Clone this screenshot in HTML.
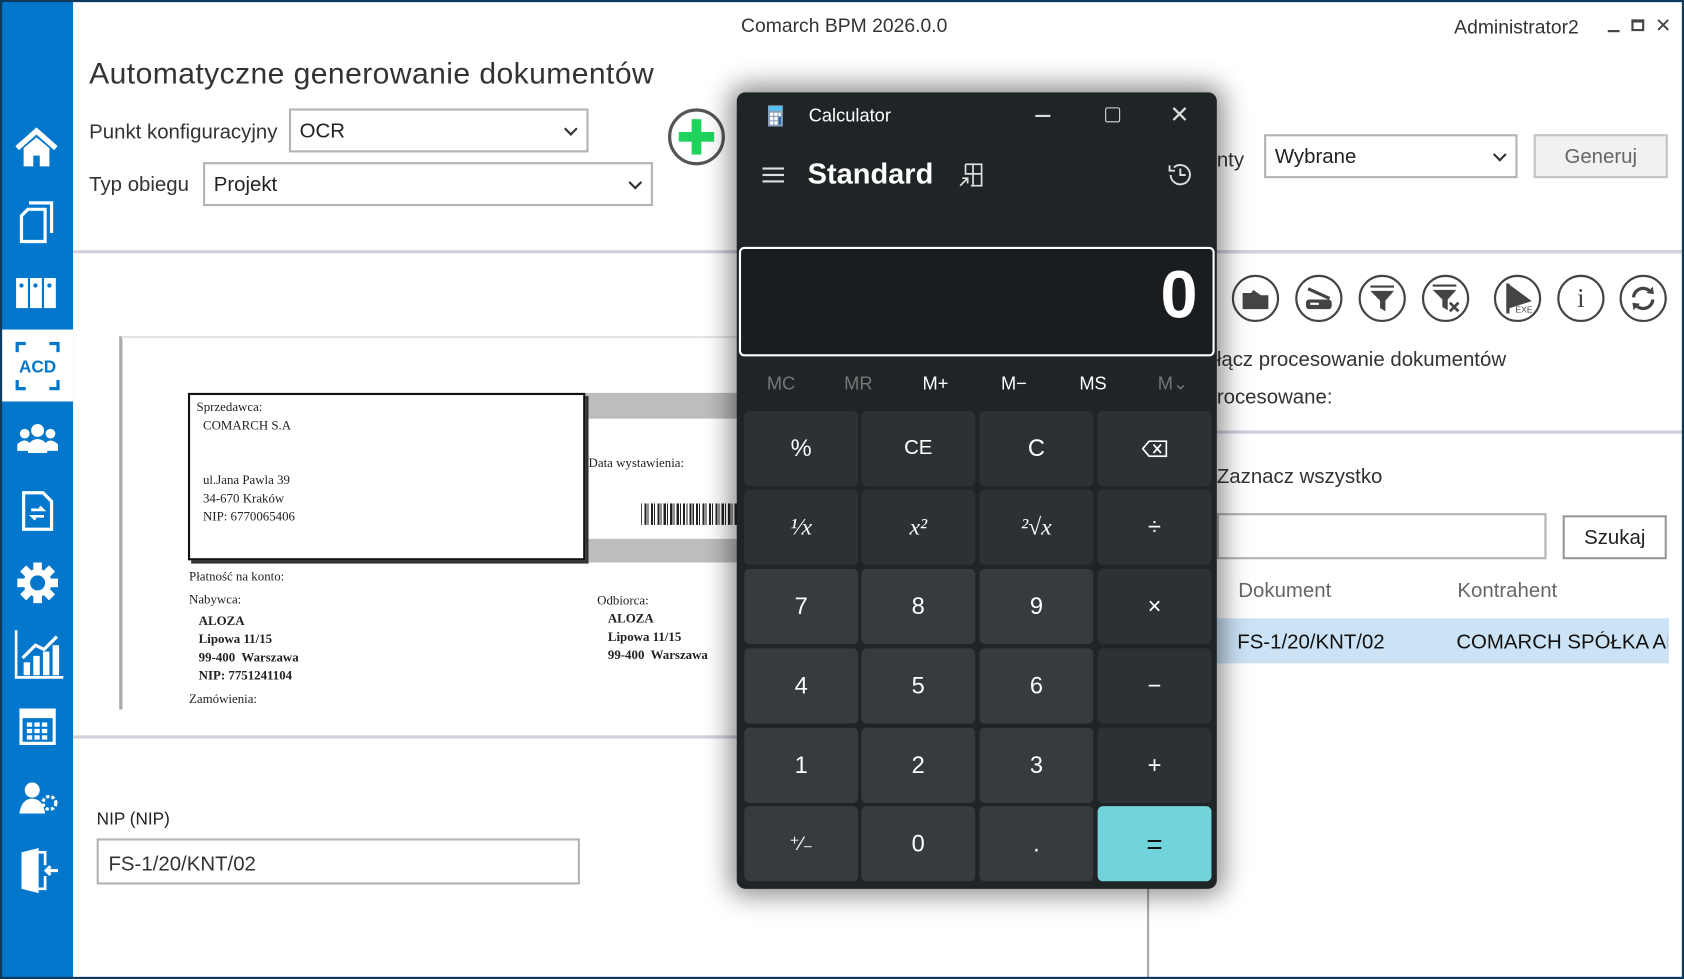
<!DOCTYPE html>
<html><head><meta charset="utf-8"><style>
*{margin:0;padding:0;box-sizing:border-box}
html,body{width:1684px;height:979px;overflow:hidden;background:#fff}
#w{position:absolute;left:0;top:0;width:1568px;height:912px;transform:scale(1.07398,1.07346);transform-origin:0 0;font-family:"Liberation Sans",sans-serif;color:#333;background:#fff;overflow:hidden}
.a{position:absolute}
.sb{left:0;top:0;width:68px;height:912px;background:#0277cc}
.t{white-space:nowrap}
#w>.t{margin-top:2px}
.sel{border:2px solid #b4b4b4;background:#fff;font-size:19px;color:#222;padding-left:8px;padding-top:3px;display:flex;align-items:center}
.sel:after{content:"";position:absolute;right:10px;top:50%;width:7px;height:7px;border-right:2px solid #333;border-bottom:2px solid #333;transform:translateY(-70%) rotate(45deg)}
.hr{height:3px;background:#d0d0de}
.ic{width:44px;height:44px;border:2px solid #444;border-radius:50%;display:flex;align-items:center;justify-content:center}
.calc{left:686px;top:86px;width:447px;height:742px;background:#1f2426;border-radius:8px;box-shadow:0 0 24px 6px rgba(0,0,0,.45);color:#fff;font-family:"Liberation Sans",sans-serif}
.k{position:absolute;width:106px;height:70px;border-radius:5px;display:flex;align-items:center;justify-content:center;font-size:22px;color:#fff}
.f{background:#2c3134}.d{background:#363b3d}
.m{position:absolute;top:262px;font-size:17px}
</style></head><body><div id="w">
<div class="a sb"></div>
<div class="a" style="left:0;top:307px;width:68px;height:67px;background:#fff"></div>
<svg class="a" style="left:14px;top:118px" width="40" height="40" viewBox="0 0 40 40"><path d="M2 20 L20 4 L38 20" stroke="#fff" stroke-width="5" fill="none"/><path d="M8 20 V37 H17 V27 H23 V37 H32 V20 L20 10Z" fill="#fff"/></svg>
<svg class="a" style="left:18px;top:187px" width="32" height="40" viewBox="0 0 32 40"><path d="M9 2 H30 V30" stroke="#fff" stroke-width="3" fill="none"/><path d="M8 8 H24 V38 H2 V14Z" stroke="#fff" stroke-width="3" fill="none"/></svg>
<svg class="a" style="left:14px;top:258px" width="40" height="30" viewBox="0 0 40 30"><rect x="1" y="1" width="11" height="28" fill="#fff"/><rect x="14" y="1" width="11" height="28" fill="#fff"/><rect x="27" y="1" width="11" height="28" fill="#fff"/><circle cx="6" cy="8" r="2" fill="#0277cc"/><circle cx="19" cy="8" r="2" fill="#0277cc"/><circle cx="32" cy="8" r="2" fill="#0277cc"/></svg>
<svg class="a" style="left:14px;top:318px" width="42" height="46" viewBox="0 0 42 46"><path d="M2 10 V2 H10 M32 2 H40 V10 M2 36 V44 H10 M32 44 H40 V36" stroke="#0277cc" stroke-width="3" fill="none"/><text x="21" y="29" text-anchor="middle" font-size="16" font-weight="bold" fill="#0277cc" font-family="Liberation Sans">ACD</text></svg>
<svg class="a" style="left:16px;top:394px" width="38" height="28" viewBox="0 0 38 28"><circle cx="19" cy="7" r="6" fill="#fff"/><circle cx="7" cy="10" r="4.5" fill="#fff"/><circle cx="31" cy="10" r="4.5" fill="#fff"/><path d="M10 28 V20 Q19 10 28 20 V28Z M0 26 V20 Q6 14 11 18 V26Z M27 18 Q32 14 38 20 V26 H27Z" fill="#fff"/></svg>
<svg class="a" style="left:20px;top:457px" width="30" height="38" viewBox="0 0 30 38"><path d="M2 2 H20 L28 10 V36 H2Z" stroke="#fff" stroke-width="3" fill="none"/><path d="M9 18 H20 L17 15 M21 24 H10 L13 27" stroke="#fff" stroke-width="2.5" fill="none"/></svg>
<svg class="a" style="left:16px;top:524px" width="38" height="38" viewBox="0 0 38 38"><circle cx="19" cy="19" r="13" fill="#fff"/><g fill="#fff"><rect x="15" y="0" width="8" height="8"/><rect x="15" y="30" width="8" height="8"/><rect x="0" y="15" width="8" height="8"/><rect x="30" y="15" width="8" height="8"/><rect x="15" y="0" width="8" height="8" transform="rotate(45 19 19)"/><rect x="15" y="30" width="8" height="8" transform="rotate(45 19 19)"/><rect x="0" y="15" width="8" height="8" transform="rotate(45 19 19)"/><rect x="30" y="15" width="8" height="8" transform="rotate(45 19 19)"/></g><circle cx="19" cy="19" r="7" fill="#0277cc"/></svg>
<svg class="a" style="left:13px;top:587px" width="46" height="46" viewBox="0 0 46 46"><path d="M2 0 V44 H46" stroke="#fff" stroke-width="2.5" fill="none"/><rect x="9" y="30" width="6" height="12" fill="#fff"/><rect x="18" y="24" width="6" height="18" fill="#fff"/><rect x="27" y="20" width="6" height="22" fill="#fff"/><rect x="36" y="14" width="6" height="28" fill="#fff"/><path d="M8 26 L20 14 L28 18 L40 6" stroke="#fff" stroke-width="3" fill="none"/></svg>
<svg class="a" style="left:18px;top:660px" width="34" height="34" viewBox="0 0 34 34"><rect x="1.5" y="1.5" width="31" height="31" stroke="#fff" stroke-width="3" fill="none"/><rect x="1" y="1" width="32" height="8" fill="#fff"/><g fill="#fff"><rect x="7" y="13" width="5" height="4"/><rect x="14" y="13" width="5" height="4"/><rect x="21" y="13" width="5" height="4"/><rect x="7" y="19" width="5" height="4"/><rect x="14" y="19" width="5" height="4"/><rect x="21" y="19" width="5" height="4"/><rect x="7" y="25" width="5" height="4"/><rect x="14" y="25" width="5" height="4"/><rect x="21" y="25" width="5" height="4"/></g></svg>
<svg class="a" style="left:16px;top:728px" width="38" height="30" viewBox="0 0 38 30"><circle cx="14" cy="8" r="7" fill="#fff"/><path d="M2 30 Q4 16 14 16 Q24 16 26 30Z" fill="#fff"/><circle cx="30" cy="20" r="6" stroke="#fff" stroke-width="3" fill="none" stroke-dasharray="3 2"/></svg>
<svg class="a" style="left:18px;top:790px" width="36" height="42" viewBox="0 0 36 42"><path d="M2 4 L18 0 V42 L2 38Z" fill="#fff"/><path d="M18 4 H24 V16 M24 26 V38 H18" stroke="#fff" stroke-width="2.5" fill="none"/><path d="M36 21 H25 M29 17 L25 21 L29 25" stroke="#fff" stroke-width="3" fill="none"/></svg>

<div class="a t" style="left:690px;top:12px;font-size:18px;color:#333">Comarch BPM 2026.0.0</div>
<div class="a t" style="left:1354px;top:13px;font-size:18px;color:#333">Administrator2</div>
<div class="a" style="left:1497px;top:28px;width:11px;height:2px;background:#444"></div>
<div class="a" style="left:1519px;top:18px;width:12px;height:11px;border:2px solid #444;border-top-width:3px"></div>
<div class="a t" style="left:1541px;top:12px;font-size:18px;color:#444">✕</div>

<div class="a t" style="left:83px;top:51px;font-size:28px;color:#333;letter-spacing:.4px">Automatyczne generowanie dokumentów</div>
<div class="a t" style="left:83px;top:111px;font-size:19px">Punkt konfiguracyjny</div>
<div class="a sel" style="left:269px;top:101px;width:279px;height:41px">OCR</div>
<div class="a t" style="left:83px;top:160px;font-size:19px">Typ obiegu</div>
<div class="a sel" style="left:189px;top:151px;width:419px;height:41px">Projekt</div>
<div class="a" style="left:622px;top:101px;width:53px;height:53px;border:3px solid #555;border-radius:50%"></div>
<div class="a" style="left:644px;top:111px;width:9px;height:33px;background:#1fd35c"></div>
<div class="a" style="left:632px;top:123px;width:33px;height:9px;background:#1fd35c"></div>
<div class="a hr" style="left:68px;top:233px;width:1500px"></div>

<div class="a" style="left:111px;top:313px;width:3px;height:348px;background:#aaa"></div>
<div class="a" style="left:113px;top:313px;width:580px;height:2px;background:#e4e4e4"></div>
<div class="a" style="left:545px;top:366px;width:150px;height:24px;background:#bdbdbd"></div>
<div class="a" style="left:545px;top:502px;width:150px;height:22px;background:#bdbdbd"></div>
<div class="a" style="left:175px;top:366px;width:370px;height:156px;border:2px solid #111;box-shadow:3px 3px 0 #333;background:#fff;font-family:'Liberation Serif',serif;font-size:12px;color:#222;padding:3px 6px;line-height:17px">Sprzedawca:<br>&nbsp;&nbsp;COMARCH S.A<br><br><br>&nbsp;&nbsp;ul.Jana Pawla 39<br>&nbsp;&nbsp;34-670 Kraków<br>&nbsp;&nbsp;NIP: 6770065406</div>
<div class="a t" style="left:548px;top:422px;font-family:'Liberation Serif',serif;font-size:12px;color:#222">Data wystawienia:</div>
<div class="a" style="left:597px;top:469px;width:95px;height:20px;background:repeating-linear-gradient(90deg,#222 0 1px,#fff 1px 3px,#222 3px 5px,#fff 5px 6px)"></div>
<div class="a" style="left:176px;top:528px;font-family:'Liberation Serif',serif;font-size:12px;color:#222;line-height:18px">Płatność na konto:<br><span style="line-height:24px">Nabywca:</span><br><b style="line-height:17px;display:block;padding-left:9px">ALOZA<br>Lipowa 11/15<br>99-400&nbsp; Warszawa<br>NIP: 7751241104</b><span style="line-height:26px">Zamówienia:</span></div>
<div class="a" style="left:556px;top:550px;font-family:'Liberation Serif',serif;font-size:12px;color:#222;line-height:18px">Odbiorca:<br><b style="line-height:17px;display:block;padding-left:10px">ALOZA<br>Lipowa 11/15<br>99-400&nbsp; Warszawa</b></div>
<div class="a hr" style="left:68px;top:685px;width:630px"></div>

<div class="a t" style="left:90px;top:753px;font-size:16px;color:#222">NIP (NIP)</div>
<div class="a" style="left:90px;top:781px;width:450px;height:43px;border:2px solid #b4b4b4;font-size:19px;color:#333;padding:12px 9px 0">FS-1/20/KNT/02</div>
<div class="a" style="left:1068px;top:820px;width:2px;height:92px;background:#aaa"></div>

<div class="a t" style="left:1133px;top:137px;font-size:19px">nty</div>
<div class="a sel" style="left:1177px;top:125px;width:236px;height:41px">Wybrane</div>
<div class="a" style="left:1428px;top:125px;width:125px;height:41px;border:2px solid #c4c4c4;background:#f1f1f1;font-size:19px;color:#666;text-align:center;line-height:40px">Generuj</div>
<div class="a hr" style="left:1133px;top:233px;width:435px"></div>
<div class="a ic" style="left:1147px;top:256px"><svg width="26" height="22"><path d="M1 6 H9 L11 3 L18 8 H25 V21 H1Z" fill="#444"/></svg></div>
<div class="a ic" style="left:1206px;top:256px"><svg width="28" height="22"><path d="M4 2 L24 11" stroke="#444" stroke-width="3"/><rect x="2" y="12" width="24" height="9" rx="3" fill="#444"/><rect x="6" y="15" width="8" height="2" fill="#fff"/></svg></div>
<div class="a ic" style="left:1265px;top:256px"><svg width="26" height="26"><path d="M2 2 H24" stroke="#444" stroke-width="2"/><path d="M2 6 H24 L16 15 V25 L11 22 V15Z" fill="#444"/></svg></div>
<div class="a ic" style="left:1324px;top:256px"><svg width="28" height="28"><path d="M2 2 H24" stroke="#444" stroke-width="2"/><path d="M2 6 H24 L16 15 V25 L11 22 V15Z" fill="#444"/><path d="M18 18 L26 26 M26 18 L18 26" stroke="#444" stroke-width="2.5"/></svg></div>
<div class="a ic" style="left:1391px;top:256px"><svg width="28" height="28"><path d="M5 0 V28 M5 2 L24 16 L5 22Z" fill="#444" stroke="#444" stroke-width="3"/><text x="12" y="27" font-size="8" fill="#444" font-family="Liberation Sans">EXE</text></svg></div>
<div class="a ic" style="left:1450px;top:256px;font-family:'Liberation Serif',serif;font-size:26px;color:#444">i</div>
<div class="a ic" style="left:1508px;top:256px"><svg width="26" height="26"><path d="M4 12 A9 9 0 0 1 20 7 M22 14 A9 9 0 0 1 6 19" stroke="#444" stroke-width="3" fill="none"/><path d="M16 8 L23 9 L22 2Z M10 18 L3 17 L4 24Z" fill="#444"/></svg></div>
<div class="a t" style="left:1133px;top:323px;font-size:19px">łącz procesowanie dokumentów</div>
<div class="a t" style="left:1133px;top:358px;font-size:19px">rocesowane:</div>
<div class="a hr" style="left:1133px;top:401px;width:435px"></div>
<div class="a t" style="left:1133px;top:432px;font-size:19px">Zaznacz wszystko</div>
<div class="a" style="left:1133px;top:478px;width:307px;height:43px;border:2px solid #b4b4b4"></div>
<div class="a" style="left:1455px;top:480px;width:97px;height:41px;border:2px solid #999;font-size:19px;color:#222;text-align:center;line-height:40px">Szukaj</div>
<div class="a t" style="left:1153px;top:538px;font-size:19px;color:#666">Dokument</div>
<div class="a t" style="left:1357px;top:538px;font-size:19px;color:#666">Kontrahent</div>
<div class="a" style="left:1133px;top:576px;width:421px;height:42px;background:#cce3f6"></div>
<div class="a t" style="left:1152px;top:586px;font-size:19px;color:#111">FS-1/20/KNT/02</div>
<div class="a t" style="left:1356px;top:586px;font-size:19px;color:#111;width:197px;overflow:hidden">COMARCH SPÓŁKA AKCYJNA</div>

<div class="a calc">
 <svg class="a" style="left:29px;top:12px" width="14" height="20"><rect width="14" height="20" fill="#8aa0b8"/><rect x="1" y="1" width="12" height="4" fill="#4fc3f7"/><g fill="#fff"><rect x="2" y="7" width="3" height="3"/><rect x="6" y="7" width="3" height="3"/><rect x="10" y="7" width="2" height="3"/><rect x="2" y="11" width="3" height="3"/><rect x="6" y="11" width="3" height="3"/><rect x="2" y="15" width="3" height="3"/><rect x="6" y="15" width="3" height="3"/></g><rect x="10" y="11" width="2" height="7" fill="#2266aa"/></svg>
 <div class="a t" style="left:67px;top:12px;font-size:17px">Calculator</div>
 <div class="a" style="left:278px;top:21px;width:14px;height:1.5px;background:#ddd"></div>
 <div class="a" style="left:343px;top:14px;width:14px;height:14px;border:1.5px solid #ddd;border-radius:2px"></div>
 <div class="a t" style="left:403px;top:8px;font-size:22px;color:#ddd;font-weight:100">✕</div>
 <div class="a" style="left:24px;top:70px;width:20px;height:2px;background:#ddd;box-shadow:0 6px 0 #ddd,0 12px 0 #ddd"></div>
 <div class="a t" style="left:66px;top:61px;font-size:27px;font-weight:bold">Standard</div>
 <svg class="a" style="left:207px;top:66px" width="22" height="22"><path d="M6 1 H21 V21 H11 M6 1 V10 H21 M13 1 V21" stroke="#ddd" stroke-width="1.6" fill="none"/><path d="M1 21 L8 14 M3 14 H8 V19" stroke="#ddd" stroke-width="1.6" fill="none"/></svg>
 <svg class="a" style="left:400px;top:64px" width="26" height="26"><path d="M4 13 A9 9 0 1 0 7 6 M3 4 V9 H8 M13 7 V13 H18" stroke="#ddd" stroke-width="1.8" fill="none"/></svg>
 <div class="a" style="left:2px;top:144px;width:443px;height:102px;border:2px solid #fff;border-radius:5px;background:#1a1d1f"></div>
 <div class="a t" style="right:18px;top:154px;font-size:62px;font-weight:bold">0</div>
 <div class="m" style="left:28px;color:#777">MC</div>
 <div class="m" style="left:100px;color:#777">MR</div>
 <div class="m" style="left:173px">M+</div>
 <div class="m" style="left:246px">M−</div>
 <div class="m" style="left:319px">MS</div>
 <div class="m" style="left:392px;color:#777">M⌄</div>
 <div class="k f" style="left:7px;top:297px">%</div><div class="k f" style="left:116px;top:297px;font-size:19px">CE</div><div class="k f" style="left:226px;top:297px">C</div><div class="k f" style="left:336px;top:297px"><svg width="24" height="16"><path d="M7 1 H23 V15 H7 L1 8Z M11 4 L18 12 M18 4 L11 12" stroke="#fff" stroke-width="1.6" fill="none"/></svg></div>
 <div class="k f" style="left:7px;top:370px;font-family:'Liberation Serif',serif;font-style:italic">¹⁄x</div><div class="k f" style="left:116px;top:370px;font-family:'Liberation Serif',serif;font-style:italic">x²</div><div class="k f" style="left:226px;top:370px;font-family:'Liberation Serif',serif;font-style:italic">²√x</div><div class="k f" style="left:336px;top:370px">÷</div>
 <div class="k d" style="left:7px;top:444px">7</div><div class="k d" style="left:116px;top:444px">8</div><div class="k d" style="left:226px;top:444px">9</div><div class="k f" style="left:336px;top:444px">×</div>
 <div class="k d" style="left:7px;top:518px">4</div><div class="k d" style="left:116px;top:518px">5</div><div class="k d" style="left:226px;top:518px">6</div><div class="k f" style="left:336px;top:518px">−</div>
 <div class="k d" style="left:7px;top:592px">1</div><div class="k d" style="left:116px;top:592px">2</div><div class="k d" style="left:226px;top:592px">3</div><div class="k f" style="left:336px;top:592px">+</div>
 <div class="k d" style="left:7px;top:665px;font-size:18px">⁺⁄₋</div><div class="k d" style="left:116px;top:665px">0</div><div class="k d" style="left:226px;top:665px">.</div><div class="k" style="left:336px;top:665px;background:#71d3dc;color:#111;font-size:26px">=</div>
</div>
<div class="a" style="left:0;top:0;width:1568px;height:912px;border:2px solid #0d3a5c;pointer-events:none"></div>
</div></body></html>
